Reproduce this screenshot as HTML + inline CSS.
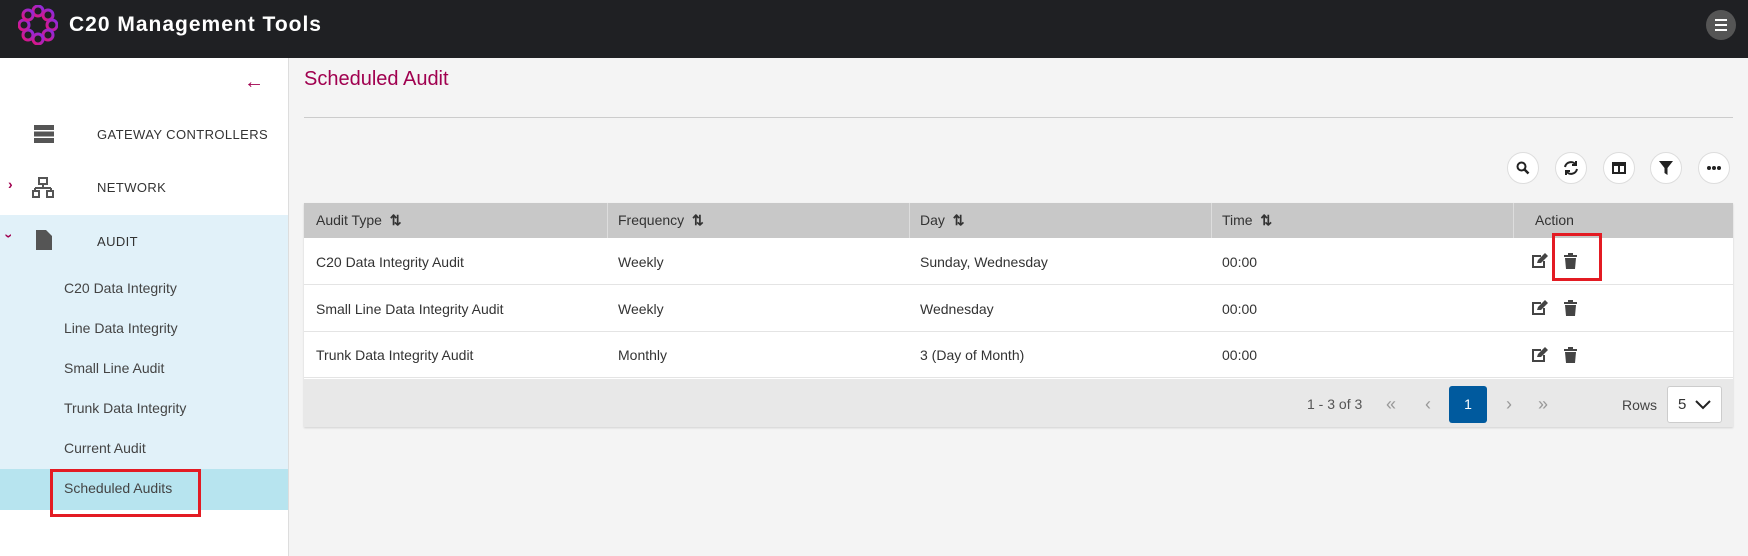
<!DOCTYPE html>
<html><head><meta charset="utf-8"><style>
*{box-sizing:border-box;margin:0;padding:0}
body{width:1748px;height:556px;overflow:hidden;background:#f4f4f4;font-family:"Liberation Sans",sans-serif;color:#333;position:relative}
.hdr{position:absolute;left:0;top:0;width:1748px;height:58px;background:#1f2023}
.hdr .t{position:absolute;left:69px;top:13px;color:#fff;font-size:21px;font-weight:bold;letter-spacing:1px}
.side{position:absolute;left:0;top:58px;width:289px;height:498px;background:#fff;border-right:1px solid #ddd}
.a{position:absolute}
.nav{position:absolute;left:97px;font-size:13px;letter-spacing:0.4px;color:#333;white-space:nowrap}
.sub{position:absolute;left:64px;font-size:14px;color:#444;white-space:nowrap}
.tbl{position:absolute;left:304px;top:203px;width:1429px;height:224px;background:#fff;box-shadow:0 1px 2px rgba(0,0,0,.15)}
.th{position:absolute;top:0;height:35px;background:#c8c8c8;width:100%}
.c{position:absolute;font-size:14px;color:#333;white-space:nowrap}
.row{position:absolute;left:0;width:100%;border-bottom:1px solid #e4e4e4}
.btn{position:absolute;top:152px;width:32px;height:32px;border-radius:50%;background:#fff;border:1px solid #ddd;display:flex;align-items:center;justify-content:center}
.pg{position:absolute;top:183px;width:20px;height:37px;line-height:37px;text-align:center;color:#999;font-size:18px}
</style></head><body>
<div class="hdr">
<svg class="a" style="left:18px;top:5px" width="40" height="40" viewBox="0 0 40 40">
<defs><linearGradient id="g" x1="0" y1="1" x2="1" y2="0"><stop offset="0" stop-color="#e0157f"/><stop offset="1" stop-color="#8a2be2"/></linearGradient></defs>
<g fill="none" stroke="url(#g)" stroke-width="3">
<circle cx="20" cy="6" r="5"/><circle cx="30" cy="10" r="5"/><circle cx="34" cy="20" r="5"/><circle cx="30" cy="30" r="5"/><circle cx="20" cy="34" r="5"/><circle cx="10" cy="30" r="5"/><circle cx="6" cy="20" r="5"/><circle cx="10" cy="10" r="5"/></g></svg>
<div class="t">C20 Management Tools</div>
<div class="a" style="left:1706px;top:10px;width:30px;height:30px;border-radius:50%;background:#555;"><div style="position:absolute;left:9px;top:9px;width:12px;height:2px;background:#fff;box-shadow:0 5px 0 #fff,0 10px 0 #fff"></div></div>
</div>
<div class="side">
<div class="a" style="left:244px;top:13px;color:#a0004f;font-size:20px;font-weight:bold">&#8592;</div>
<svg class="a" style="left:34px;top:66px" width="20" height="20" viewBox="0 0 20 20" fill="#555"><rect x="0" y="1" width="20" height="5"/><rect x="0" y="7.5" width="20" height="5"/><rect x="0" y="14" width="20" height="5"/></svg>
<div class="nav" style="top:69px">GATEWAY CONTROLLERS</div>
<div class="a" style="left:8px;top:118px;color:#a0004f;font-size:14px;font-weight:bold">&#8250;</div>
<svg class="a" style="left:32px;top:119px" width="22" height="22" viewBox="0 0 22 22" fill="none" stroke="#555" stroke-width="2"><rect x="7" y="1" width="8" height="6"/><path d="M11 7v4M3 11h16M3 11v3M19 11v3"/><rect x="1" y="14" width="6" height="6"/><rect x="15" y="14" width="6" height="6"/></svg>
<div class="nav" style="top:122px">NETWORK</div>
<div class="a" style="left:0;top:157px;width:288px;height:295px;background:#e1f1f9"></div>
<div class="a" style="left:0;top:411px;width:288px;height:41px;background:#b7e4ef"></div>
<div class="a" style="left:7px;top:170px;color:#a0004f;font-size:14px;font-weight:bold;transform:rotate(90deg)">&#8250;</div>
<svg class="a" style="left:36px;top:172px" width="16" height="20" viewBox="0 0 16 20" fill="#555"><path d="M0 0h10l6 6v14H0z"/></svg>
<div class="nav" style="top:176px">AUDIT</div>
<div class="sub" style="top:222px">C20 Data Integrity</div>
<div class="sub" style="top:262px">Line Data Integrity</div>
<div class="sub" style="top:302px">Small Line Audit</div>
<div class="sub" style="top:342px">Trunk Data Integrity</div>
<div class="sub" style="top:382px">Current Audit</div>
<div class="sub" style="top:422px">Scheduled Audits</div>
<div class="a" style="left:50px;top:411px;width:151px;height:48px;border:3px solid #e31b23"></div>
</div>
<div class="a" style="left:304px;top:68px;color:#a0004f;font-size:20px">Scheduled Audit</div>
<div class="a" style="left:304px;top:117px;width:1429px;height:1px;background:#ccc"></div>
<div class="btn" style="left:1507px"><svg width="14" height="14" viewBox="0 0 14 14"><circle cx="5.5" cy="5.5" r="4" fill="none" stroke="#222" stroke-width="2"/><path d="M8.5 8.5l4 4" stroke="#222" stroke-width="2.5"/></svg></div>
<div class="btn" style="left:1555px"><svg width="16" height="16" viewBox="0 0 16 16" fill="none" stroke="#222" stroke-width="2"><path d="M2 7a6 6 0 0 1 11-2M14 9a6 6 0 0 1-11 2"/><path d="M13 1v4H9M3 15v-4h4"/></svg></div>
<div class="btn" style="left:1603px"><svg width="14" height="12" viewBox="0 0 14 12"><rect x="1" y="1" width="12" height="10" fill="none" stroke="#222" stroke-width="2"/><rect x="1" y="1" width="12" height="3" fill="#222"/><path d="M7 1v10" stroke="#222" stroke-width="2"/></svg></div>
<div class="btn" style="left:1650px"><svg width="14" height="14" viewBox="0 0 14 14"><path d="M0 0h14L8.5 7v7L5.5 12V7z" fill="#222"/></svg></div>
<div class="btn" style="left:1698px"><svg width="14" height="4" viewBox="0 0 14 4" fill="#222"><circle cx="2" cy="2" r="2"/><circle cx="7" cy="2" r="2"/><circle cx="12" cy="2" r="2"/></svg></div>
<div class="tbl">
<div class="th"></div>
<div class="a" style="left:303px;top:0;width:1px;height:35px;background:#ddd"></div>
<div class="a" style="left:605px;top:0;width:1px;height:35px;background:#ddd"></div>
<div class="a" style="left:907px;top:0;width:1px;height:35px;background:#ddd"></div>
<div class="a" style="left:1209px;top:0;width:1px;height:35px;background:#ddd"></div>
<div class="c" style="left:12px;top:9px">Audit Type &nbsp;<b>&#8645;</b></div>
<div class="c" style="left:314px;top:9px">Frequency &nbsp;<b>&#8645;</b></div>
<div class="c" style="left:616px;top:9px">Day &nbsp;<b>&#8645;</b></div>
<div class="c" style="left:918px;top:9px">Time &nbsp;<b>&#8645;</b></div>
<div class="c" style="left:1231px;top:9px">Action</div>
<div class="row" style="top:35px;height:47px"></div>
<div class="row" style="top:82px;height:47px"></div>
<div class="row" style="top:129px;height:46px"></div>
<div class="c" style="left:12px;top:51px">C20 Data Integrity Audit</div><div class="c" style="left:314px;top:51px">Weekly</div><div class="c" style="left:616px;top:51px">Sunday, Wednesday</div><div class="c" style="left:918px;top:51px">00:00</div>
<div class="c" style="left:12px;top:98px">Small Line Data Integrity Audit</div><div class="c" style="left:314px;top:98px">Weekly</div><div class="c" style="left:616px;top:98px">Wednesday</div><div class="c" style="left:918px;top:98px">00:00</div>
<div class="c" style="left:12px;top:144px">Trunk Data Integrity Audit</div><div class="c" style="left:314px;top:144px">Monthly</div><div class="c" style="left:616px;top:144px">3 (Day of Month)</div><div class="c" style="left:918px;top:144px">00:00</div>
<svg class="a" style="left:1227px;top:50px" width="17" height="16" viewBox="0 0 17 16"><path d="M10 3H2v11h11V8" fill="none" stroke="#444" stroke-width="2"/><path d="M6 10l1-3 7-7 3 3-7 7z" fill="#444"/></svg>
<svg class="a" style="left:1260px;top:50px" width="13" height="16" viewBox="0 0 13 16" fill="#444"><rect x="0" y="2" width="13" height="2"/><rect x="4" y="0" width="5" height="2"/><path d="M1 5h11l-1 11H2z"/></svg>
<svg class="a" style="left:1227px;top:97px" width="17" height="16" viewBox="0 0 17 16"><path d="M10 3H2v11h11V8" fill="none" stroke="#444" stroke-width="2"/><path d="M6 10l1-3 7-7 3 3-7 7z" fill="#444"/></svg>
<svg class="a" style="left:1260px;top:97px" width="13" height="16" viewBox="0 0 13 16" fill="#444"><rect x="0" y="2" width="13" height="2"/><rect x="4" y="0" width="5" height="2"/><path d="M1 5h11l-1 11H2z"/></svg>
<svg class="a" style="left:1227px;top:144px" width="17" height="16" viewBox="0 0 17 16"><path d="M10 3H2v11h11V8" fill="none" stroke="#444" stroke-width="2"/><path d="M6 10l1-3 7-7 3 3-7 7z" fill="#444"/></svg>
<svg class="a" style="left:1260px;top:144px" width="13" height="16" viewBox="0 0 13 16" fill="#444"><rect x="0" y="2" width="13" height="2"/><rect x="4" y="0" width="5" height="2"/><path d="M1 5h11l-1 11H2z"/></svg>
<div class="a" style="left:1248px;top:30px;width:50px;height:48px;border:3px solid #e31b23"></div>
<div class="a" style="left:0;top:176px;width:100%;height:48px;background:#e8e8e8"></div>
<div class="c" style="left:1003px;top:193px;color:#555">1 - 3 of 3</div>
<div class="pg" style="left:1077px">&#171;</div>
<div class="pg" style="left:1114px">&#8249;</div>
<div class="a" style="left:1145px;top:183px;width:38px;height:37px;background:#005a9e;border-radius:3px;color:#fff;font-size:14px;text-align:center;line-height:37px">1</div>
<div class="pg" style="left:1195px">&#8250;</div>
<div class="pg" style="left:1229px">&#187;</div>
<div class="c" style="left:1318px;top:194px;color:#444">Rows</div>
<div class="a" style="left:1363px;top:183px;width:55px;height:37px;background:#fff;border:1px solid #ccc;border-radius:3px"><span style="position:absolute;left:10px;top:9px;font-size:15px">5</span><svg style="position:absolute;left:27px;top:13px" width="16" height="10" viewBox="0 0 16 10"><path d="M1 1l7 7 7-7" fill="none" stroke="#222" stroke-width="2"/></svg></div>
</div>
</body></html>
